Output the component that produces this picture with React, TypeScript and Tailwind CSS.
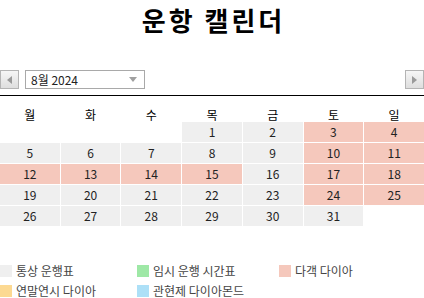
import { useState } from 'react'

const days = ['월', '화', '수', '목', '금', '토', '일']

// 12~15 obon, weekends are 다객 다이아 too except 31
const pink = [3, 4, 10, 11, 12, 13, 14, 15, 17, 18, 24, 25]

const legend = [
    { label: '통상 운행표', color: 'bg-[#efefef]', w: 'w-[137px]' },
    { label: '임시 운행 시간표', color: 'bg-[#9ee8a6]', w: 'w-[142px]' },
    { label: '다객 다이아', color: 'bg-[#f5c8bc]', w: 'w-[140px]' },
    { label: '연말연시 다이아', color: 'bg-[#fcd992]', w: 'w-[137px]' },
    { label: '관현제 다이아몬드', color: 'bg-[#ade0f7]', w: 'w-[142px]' },
]

const NavButton = ({ dir }: { dir: 'left' | 'right' }) => (
    <button className="flex items-center justify-center w-[19px] h-[19px] border border-[#b4b4b4] bg-gradient-to-b from-[#f6f6f6] to-[#dedede]">
        {dir === 'left' ? (
            <span className="w-0 h-0 border-y-[4px] border-y-transparent border-r-[5px] border-r-[#9a9a9a]" />
        ) : (
            <span className="w-0 h-0 border-y-[4px] border-y-transparent border-l-[5px] border-l-[#9a9a9a]" />
        )}
    </button>
)

export default function App() {
    const [month] = useState('8월 2024')

    const cells: (number | null)[] = [null, null, null]
    for (let d = 1; d <= 31; d++) cells.push(d)
    cells.push(null)

    return (
        <div className="w-[424px] h-[298px] overflow-hidden bg-white text-[#222] font-['Noto_Sans_CJK_KR',sans-serif]">
            <h1 className="h-[40px] pl-[3px] text-center text-[26px] font-bold leading-[40px] tracking-[3px] text-black">
                운항 캘린더
            </h1>

            <div className="mt-[30px] flex items-center justify-between h-[19px]">
                <div className="flex items-center gap-[6px]">
                    <NavButton dir="left" />
                    <div className="flex items-center justify-between w-[120px] h-[19px] border border-[#a9a9a9] pl-[5px] pr-[7px] text-[12px] leading-none">
                        <span>{month}</span>
                        <span className="w-0 h-0 border-x-[4px] border-x-transparent border-t-[5px] border-t-[#a0a0a0]" />
                    </div>
                </div>
                <NavButton dir="right" />
            </div>

            <div className="mt-[6px] border-b border-black" />

            <div className="grid grid-cols-7 gap-px">
                {days.map((d) => (
                    <div key={d} className="h-[25px] pt-[11px] text-center text-[12px] leading-4 text-black">
                        {d}
                    </div>
                ))}
                {cells.map((c, i) => (
                    <div
                        key={i}
                        className={
                            'h-[20px] flex items-center justify-center text-[12px] ' +
                            (c === null ? 'bg-white' : pink.includes(c) ? 'bg-[#f5c8bc]' : 'bg-[#efefef]')
                        }
                    >
                        {c}
                    </div>
                ))}
            </div>

            <div className="mt-[35px] flex flex-wrap">
                {legend.map((l) => (
                    <div key={l.label} className={'flex items-center gap-[4px] h-[20px] ' + l.w}>
                        <span className={'shrink-0 w-[12px] h-[12px] ' + l.color} />
                        <span className="text-[12px] text-[#444] whitespace-nowrap">{l.label}</span>
                    </div>
                ))}
            </div>
        </div>
    )
}
